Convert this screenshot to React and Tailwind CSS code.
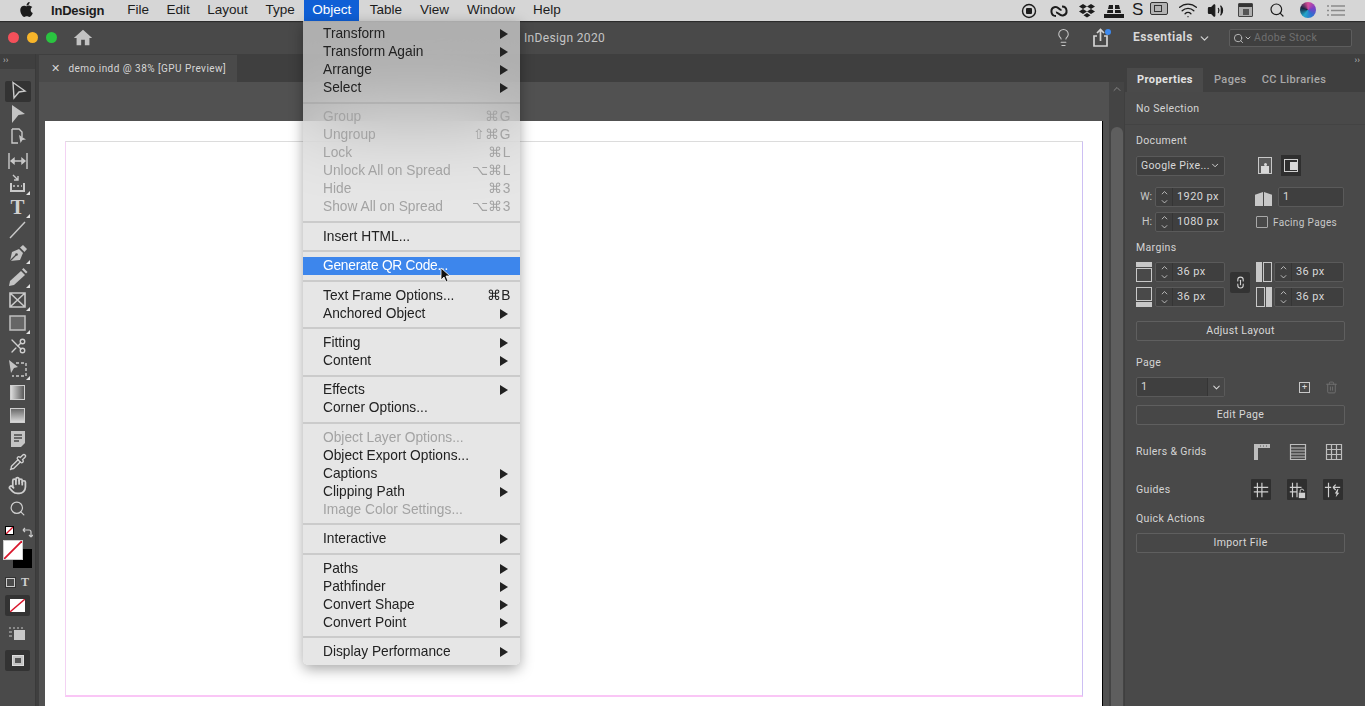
import React from "react";
import { FaApple } from "react-icons/fa";
import { MdHome } from "react-icons/md";
import { Search, ChevronDown, ChevronUp, Lightbulb, Scissors, Hand, Pipette, Volume2, Wifi, Trash2, Link2 } from "lucide-react";

const menu = [
  [["Transform", 1], ["Transform Again", 1], ["Arrange", 1], ["Select", 1]],
  [["Group", 0, "⌘G"], ["Ungroup", 0, "⇧⌘G"], ["Lock", 0, "⌘L"], ["Unlock All on Spread", 0, "⌥⌘L"], ["Hide", 0, "⌘3"], ["Show All on Spread", 0, "⌥⌘3"]],
  [["Insert HTML..."]],
  [["Generate QR Code...", 2]],
  [["Text Frame Options...", 0, "⌘B", true], ["Anchored Object", 1]],
  [["Fitting", 1], ["Content", 1]],
  [["Effects", 1], ["Corner Options..."]],
  [["Object Layer Options...", 0, "", false, true], ["Object Export Options..."], ["Captions", 1], ["Clipping Path", 1], ["Image Color Settings...", 0, "", false, true]],
  [["Interactive", 1]],
  [["Paths", 1], ["Pathfinder", 1], ["Convert Shape", 1], ["Convert Point", 1]],
  [["Display Performance", 1]],
];

function MenuRow({ item, groupIdx }) {
  const [label, kind, shortcut, shortcutDark, dimmed] = item;
  const disabled = groupIdx === 1 || dimmed;
  if (kind === 2) {
    return (
      <div className="h-[18px] flex items-center pl-5 pr-2 bg-[#3d86ec] text-white tracking-[-0.25px]">{label}</div>
    );
  }
  return (
    <div className={`h-[18px] flex items-center justify-between pl-5 pr-[9px] ${disabled ? "text-[#a3a3a3]" : "text-[#222222]"}`}>
      <span>{label}</span>
      {kind === 1 && (
        <svg width="9" height="10" viewBox="0 0 9 10" className="mr-[2px]"><polygon points="0,0 8,5 0,10" fill="#222222" /></svg>
      )}
      {shortcut && <span className={`tracking-[0.6px] ${shortcutDark ? "text-[#222222]" : "text-[#a3a3a3]"}`}>{shortcut}</span>}
    </div>
  );
}

function ObjectMenu() {
  return (
    <div className="absolute left-[303px] top-[21px] w-[217px] h-[644px] pt-[4px] rounded-b-[5px] bg-[#dcdcdc]/70 backdrop-blur-2xl shadow-[0_4px_14px_rgba(0,0,0,0.35)] text-[13.75px] leading-[18px] font-['Liberation_Sans',sans-serif] z-20">
      {menu.map((group, i) => (
        <React.Fragment key={i}>
          {i > 0 && (
            <div className="h-[11.4px] flex items-center"><div className="h-[2px] w-full bg-[#8f8f8f]/30" /></div>
          )}
          {group.map((item) => <MenuRow key={item[0]} item={item} groupIdx={i} />)}
        </React.Fragment>
      ))}
    </div>
  );
}

const MI = ({ w = 20, children, vb = "0 0 20 16", h = 16, cls = "" }) => (
  <svg width={w} height={h} viewBox={vb} className={`shrink-0 ${cls}`}>{children}</svg>
);

function StatusIcons() {
  return (
    <div className="absolute right-0 top-0 h-[21px] text-[#1c1c1c]">
      <div className="relative h-full w-[365px]">
        <div className="absolute left-[21px] top-[3px]">
          <MI w="16" vb="0 0 16 16"><circle cx="8" cy="8" r="6.5" fill="none" stroke="#1c1c1c" strokeWidth="1.4" /><rect x="5" y="5" width="6" height="6" rx="1" fill="#1c1c1c" /></MI>
        </div>
        <div className="absolute left-[49px] top-[3px]">
          <MI w="20"><path d="M7 13a4.500 4.500 0 0 1-1-8.900C9 3 10 7 12.500 7M13 3.500a4.500 4.500 0 0 1 1 8.900C11 13.500 9 9 7 9.500" fill="none" stroke="#1c1c1c" strokeWidth="2" /></MI>
        </div>
        <div className="absolute left-[78px] top-[3px]">
          <MI w="18" vb="0 0 18 16"><path d="M5 1 1 3.500 5 6l4-2.500ZM13 1 9 3.500 13 6l4-2.500ZM5 6 1 8.500 5 11l4-2.500ZM13 6 9 8.500 13 11l4-2.500ZM9 10 5.500 12.200 9 14.500l3.500-2.300Z" fill="#1c1c1c" /></MI>
        </div>
        <div className="absolute left-[104px] top-[3px]">
          <MI w="20"><path d="M5 2h4v4H4ZM11 2h4l1 4h-5ZM3.500 7H9v3H3ZM11 7h5.500l.500 3H11ZM0 11h20v4H0Z" fill="#1c1c1c" /></MI>
        </div>
        <span className="absolute left-[132px] top-[-1px] text-[17px] leading-[22px] font-['Liberation_Sans',sans-serif]">S</span>
        <div className="absolute left-[150px] top-[2px] w-[18px] h-[13px] border border-[#333333] rounded-[2px] bg-[#b3b3b3] flex items-center pl-[3px]">
          <div className="w-[8px] h-[7px] border border-[#333333]" />
        </div>
        <Wifi size={20} strokeWidth={1.6} className="absolute left-[178px] top-[0px]" />
        <Volume2 size={17} fill="#1c1c1c" strokeWidth={1.6} className="absolute left-[207px] top-[2px]" />
        <div className="absolute left-[238px] top-[3px] w-[15px] h-[14px] border border-[#444444] bg-[#aeaeae] rounded-[1px]">
          <div className="h-[3px] bg-[#333333]" />
          <div className="mx-auto mt-[2px] w-[6px] h-[6px] bg-[#555555]" />
        </div>
        <Search size={16} strokeWidth={1.8} className="absolute left-[269px] top-[2px]" />
        <div className="absolute left-[300px] top-[2px] w-[16px] h-[16px] rounded-full bg-[conic-gradient(#d84a9a,#7b3fc4,#2e6fd0,#22a6c8,#16243f,#d84a9a)]" />
        <div className="absolute left-[327px] top-[5px]">
          <MI w="18" h="11" vb="0 0 18 11"><path d="M0 1h2M4 1h14M0 5.500h2M4 5.500h14M0 10h2M4 10h14" stroke="#8a8a8a" strokeWidth="1.300" /></MI>
        </div>
      </div>
    </div>
  );
}

function MenuBar() {
  const items = ["File", "Edit", "Layout", "Type"];
  const rest = ["Table", "View", "Window", "Help"];
  return (
    <div className="relative h-[21px] bg-[#d6d6d6] flex items-center text-[13.5px] text-[#1c1c1c] font-['Liberation_Sans',sans-serif] shadow-[0_1px_1px_rgba(0,0,0,0.4)] z-10">
      <FaApple size={17} className="ml-[18px] mr-[16px] -mt-[2px]" />
      <span className="font-bold text-[13px] tracking-[-0.2px] mr-[23px]">InDesign</span>
      <div className="flex items-center gap-[17.5px]">
        {items.map((t) => <span key={t}>{t}</span>)}
        <span className="-ml-2 px-2 h-[21px] flex items-center bg-[#0f5fd6] text-white">Object</span>
      </div>
      <div className="ml-[10.5px] flex items-center gap-[18px]">
        {rest.map((t) => <span key={t}>{t}</span>)}
      </div>
      <StatusIcons />
    </div>
  );
}

function TitleBar() {
  return (
    <div className="relative h-[33px] bg-[#494949] flex items-center font-['Roboto',sans-serif]">
      <span className="ml-[8px] w-[11px] h-[11px] rounded-full bg-[#f4505a]" />
      <span className="ml-[8px] w-[11px] h-[11px] rounded-full bg-[#f7b52a]" />
      <span className="ml-[8px] w-[11px] h-[11px] rounded-full bg-[#2ac440]" />
      <MdHome size={22} className="ml-[15px] text-[#c2c2c2]" />
      <span className="ml-[430px] text-[12px] tracking-[0.35px] text-[#c4c4c4]">InDesign 2020</span>
      <Lightbulb size={19} strokeWidth={1.3} className="absolute left-[1054px] top-[7px] text-[#c8c8c8]" />
      <div className="absolute left-[1091px] top-[7px]">
        <svg width="20" height="20" viewBox="0 0 20 20"><path d="M6 8H3v10h13V8h-3M9.500 13V2M6 5l3.500-3.500L13 5" fill="none" stroke="#d4d4d4" strokeWidth="1.700" /></svg>
      </div>
      <span className="absolute left-[1105px] top-[8px] w-[6px] h-[6px] rounded-full bg-[#3d8af0]" />
      <span className="absolute left-[1133px] top-[9px] text-[12px] leading-[15px] font-bold tracking-[0.45px] text-[#d8d8d8]">Essentials</span>
      <ChevronDown size={13} strokeWidth={2.4} className="absolute left-[1198px] top-[11px] text-[#d0d0d0]" />
      <div className="absolute left-[1229px] top-[8px] w-[123px] h-[18px] bg-[#3f3f3f] border border-[#5d5d5d] rounded-[2px] flex items-center pl-[3px] text-[10.5px] tracking-[0.35px] text-[#6f6f6f]">
        <Search size={11} strokeWidth={2} className="text-[#bdbdbd]" />
        <ChevronDown size={8} strokeWidth={3} className="text-[#bdbdbd] mr-[2px]" />
        Adobe Stock
      </div>
    </div>
  );
}

const stroke = { fill: "none", stroke: "#c9c9c9", strokeWidth: 1.4 };
const fill = { fill: "#c4c4c4" };
const Tri = () => <polygon points="24,18 24,22 20,22" fill="#e2e2e2" />;

const tools = [
  { active: true, d: <path d="M7 2.500 19 11l-6 1-5 6Z" {...stroke} /> },
  { d: <path d="M6 2 19 11l-6.500 1L6 20Z" {...fill} /> },
  { d: <g><path d="M6 3h7l3 3v5M6 3v14h6" {...stroke} /><path d="M13 9l7 4.500-3.500.5-2 3Z" {...fill} /></g> },
  { d: <path d="M3 3v16M21 3v16M5 11h14M5 11l3-2.500v5ZM19 11l-3-2.500v5Z" {...stroke} /> },
  { t: 1, d: <g><path d="M5 10v8h13v-8" {...stroke} strokeWidth="2" /><path d="M7 2l5 5M12 3v4H8" {...stroke} /><path d="M7 13h2M11 13h2M15 13h1" {...stroke} /></g> },
  { t: 1, txt: "T" },
  { d: <path d="M4 19 19 3" {...stroke} /> },
  { t: 1, d: <g><path d="M4 19l2-9 7-3 4 4-3 7Z" {...fill} /><path d="M14 5.500l3-2.500 4 4-2.500 3Z" {...fill} /><path d="M4 19l6-6" stroke="#4a4a4a" strokeWidth="1.200" /><circle cx="10.500" cy="12.500" r="1.300" fill="#4a4a4a" /></g> },
  { t: 1, d: <g><path d="M15 5l4 4L8 19l-5 1 1-5Z" {...fill} /><path d="M16 3.500l1.500-1.500 4 4-1.500 1.500Z" {...fill} /></g> },
  { t: 1, d: <path d="M4 4h15v14H4ZM4 4l15 14M19 4 4 18" {...stroke} strokeWidth="1.600" /> },
  { t: 1, d: <rect x="4" y="4" width="15" height="14" fill="#666666" stroke="#c0c0c0" strokeWidth="1.500" /> },
  { icon: <Scissors size={18} strokeWidth={1.8} className="text-[#cfcfcf] -scale-x-100" /> },
  { t: 1, d: <g><path d="M3 2l9 7-4 1-3 5Z" {...fill} /><path d="M10 5h10v13H6" {...stroke} strokeDasharray="3 2" /></g> },
  { grad: "bg-[linear-gradient(90deg,#dadada,#5a5a5a)]" },
  { grad: "bg-[linear-gradient(180deg,#6a6a6a,#dadada)]" },
  { t: 0, d: <g><path d="M5 3h14v12l-4 4H5Z" {...fill} /><path d="M8 7h8M8 10h8M8 13h5" stroke="#4a4a4a" strokeWidth="1.300" /></g> },
  { t: 1, icon: <Pipette size={18} strokeWidth={1.8} className="text-[#cfcfcf] -scale-x-100 rotate-90" /> },
  { icon: <Hand size={19} strokeWidth={2.2} className="text-[#cfcfcf]" /> },
  { icon: <Search size={17} strokeWidth={1.7} className="text-[#cfcfcf]" /> },
];

function Tool({ tool }) {
  return (
    <div className="h-[23.2px] flex items-center justify-center">
      <div className={`relative w-[26px] h-[21px] flex items-center justify-center rounded-[2px] ${tool.active ? "bg-[#333333]" : ""}`}>
        {tool.d && <svg width="24" height="22" viewBox="0 0 24 22">{tool.d}{tool.t ? <Tri /> : null}</svg>}
        {tool.txt && (
          <>
            <span className="font-['Liberation_Serif',serif] font-bold text-[21px] leading-[21px] text-[#d0d0d0]">{tool.txt}</span>
            <svg width="4" height="4" viewBox="0 0 4 4" className="absolute right-[1px] bottom-0"><polygon points="4,0 4,4 0,4" fill="#e2e2e2" /></svg>
          </>
        )}
        {tool.icon}
        {tool.grad && <div className={`w-[15px] h-[15px] border border-[#cfcfcf] ${tool.grad}`} />}
      </div>
    </div>
  );
}

const NoneSwatch = ({ cls }) => (
  <div className={`overflow-hidden bg-white ${cls}`}>
    <svg className="w-full h-full" viewBox="0 0 20 20" preserveAspectRatio="none"><path d="M0 20 20 0" stroke="#d8152b" strokeWidth="2" /></svg>
  </div>
);

function Toolbar() {
  return (
    <div className="w-[36px] shrink-0 bg-[#4a4a4a] border-r-[1px] border-[#3a3a3a] flex flex-col font-['Roboto',sans-serif]">
      <div className="h-[15px] bg-[#3f3f3f] pl-[3px] text-[9px] leading-[13px] text-[#bbbbbb]">››</div>
      <div className="h-[10.500px]" />
      {tools.map((t, i) => <Tool key={i} tool={t} />)}
      <div className="relative h-[45px] mt-[4px]">
        <div className="absolute left-[5px] top-[2px] w-[9px] h-[9px] border border-black bg-white overflow-hidden">
          <svg className="w-full h-full" viewBox="0 0 8 8"><path d="M0 8 8 0" stroke="#d8152b" strokeWidth="1.500" /></svg>
        </div>
        <svg width="11" height="11" viewBox="0 0 11 11" className="absolute left-[22px] top-[3px]"><path d="M1 3h6a2 2 0 0 1 2 2v5M1 3l2-2M1 3l2 2M9 10 7 8M9 10l2-2" fill="none" stroke="#cccccc" strokeWidth="1.200" /></svg>
        <div className="absolute left-[13px] top-[25px] w-[19px] h-[19px] bg-black" />
        <NoneSwatch cls="absolute left-[3px] top-[16px] w-[20px] h-[20px] border border-[#cccccc]" />
      </div>
      <div className="flex items-center justify-center gap-[6px] h-[22px] mt-[2px]">
        <div className="w-[9px] h-[9px] border-[1.5px] border-[#cccccc] outline-[1px] outline-[#333333]" />
        <span className="font-['Liberation_Serif',serif] font-bold text-[12px] leading-[12px] text-[#d0d0d0]">T</span>
      </div>
      <div className="relative mx-[5px] h-[21px] mt-[2px] rounded-[2px] bg-[#333333] flex items-center justify-center">
        <NoneSwatch cls="w-[15px] h-[13px]" />
      </div>
      <div className="h-[28px] mt-[4px] flex items-center justify-center">
        <svg width="18" height="14" viewBox="0 0 18 14"><rect x="5" y="3" width="11" height="10" fill="#c8c8c8" /><path d="M0 1h2M4 1h2M8 1h2M12 1h2M0 5h3M0 9h3" stroke="#c8c8c8" strokeWidth="1.200" /></svg>
      </div>
      <div className="mx-[5px] h-[21px] mt-[2px] rounded-[2px] bg-[#333333] flex items-center justify-center">
        <div className="w-[12px] h-[11px] bg-[#c4c4c4] border border-[#dddddd] flex items-center justify-center">
          <div className="w-[6px] h-[5px] bg-[#555555]" />
        </div>
      </div>
    </div>
  );
}

function Canvas() {
  return (
    <div className="flex-1 min-w-0 flex flex-col font-['Roboto',sans-serif] pl-[3px] bg-[#3f3f3f]">
      <div className="h-[28px] flex pt-[1px]">
        <div className="w-[198px] h-[27px] bg-[#4a4a4a] flex items-center text-[10px] tracking-[0.45px] text-[#d6d6d6]">
          <span className="ml-[12px] mr-[8px] text-[11px] leading-none">✕</span>
          demo.indd @ 38% [GPU Preview]
        </div>
      </div>
      <div className="flex-1 min-h-0 flex bg-[#515151]">
        <div className="flex-1 min-w-0 pl-[6px] pt-[39px] pr-[6px] overflow-hidden">
          <div className="h-full bg-white border-r-[1px] border-black pl-[20px] pt-[20px]">
            <div className="w-[1018px] h-[556px] border border-t-[#dcdcdc] border-l-[#f3d3f3] border-r-[#cdbff3] border-b-[#fac6f6] border-b-[2px]" />
          </div>
        </div>
        <div className="w-[15px] shrink-0 bg-[#444444] flex flex-col items-center pt-[1px]">
          <ChevronUp size={12} strokeWidth={2} className="text-[#858585] mt-[0px]" />
          <div className="mt-[32px] w-[12px] flex-1 rounded-t-[6px] bg-[#5e5e5e]" />
        </div>
      </div>
    </div>
  );
}

const Stepper = () => (
  <div className="w-[17px] h-full shrink-0 border-r border-[#353535] flex flex-col items-center justify-center text-[#d8d8d8]">
    <ChevronUp size={11} strokeWidth={2} className="-mb-[1px]" />
    <ChevronDown size={11} strokeWidth={2} />
  </div>
);

const Field = ({ value, w = "w-[69px]", step = true }) => (
  <div className={`${w} h-[20px] shrink-0 bg-[#3f3f3f] border border-[#5a5a5a] rounded-[2px] flex items-center text-[11px] tracking-[0.4px] text-[#d8d8d8]`}>
    {step && <Stepper />}
    <span className="pl-[4px]">{value}</span>
  </div>
);

const Btn = ({ children, cls = "" }) => (
  <div className={`h-[20px] w-[209px] bg-[#474747] border border-[#5f5f5f] rounded-[2px] flex items-center justify-center text-[10.500px] tracking-[0.35px] text-[#d8d8d8] ${cls}`}>{children}</div>
);

const Label = ({ children, cls = "" }) => <div className={`text-[10.500px] leading-[14px] tracking-[0.35px] text-[#d4d4d4] ${cls}`}>{children}</div>;

const MarginIcon = ({ side }) => (
  <div className={`w-[16px] h-[20px] shrink-0 flex ${side === "t" ? "flex-col" : side === "b" ? "flex-col-reverse" : side === "l" ? "flex-row" : "flex-row-reverse"} gap-[1px]`}>
    <div className={`bg-[#c8c8c8] ${side === "t" || side === "b" ? "h-[5px]" : "w-[6px]"}`} />
    <div className="flex-1 border border-[#c8c8c8]" />
  </div>
);

const SmallDark = ({ children }) => (
  <div className="w-[20px] h-[21px] bg-[#2f2f2f] rounded-[1px] flex items-center justify-center">
    {children}
  </div>
);

const guidePaths = "M6 2v16M11 2v16M2 7h16M2 12h16";

function Panel() {
  return (
    <div className="w-[240px] ml-[1px] shrink-0 bg-[#494949] flex flex-col font-['Roboto',sans-serif]">
      <div className="h-[14px] bg-[#3f3f3f] text-right pr-[5px] text-[9px] leading-[12px] text-[#bbbbbb]">››</div>
      <div className="h-[24px] flex bg-[#3f3f3f] items-stretch text-[11px] font-medium tracking-[0.4px]">
        <div className="ml-[2px] w-[76px] bg-[#4a4a4a] flex items-center justify-center text-[#e2e2e2] font-bold">Properties</div>
        <div className="ml-[11px] flex items-center text-[#a8a8a8]">Pages</div>
        <div className="ml-[15px] flex items-center text-[#a8a8a8]">CC Libraries</div>
      </div>
      <div className="pl-[11px] flex flex-col">
        <Label cls="mt-[10px]">No Selection</Label>
        <div className="mt-[8px] -ml-[11px] h-[1px] bg-[#434343]" />
        <Label cls="mt-[9px]">Document</Label>
        <div className="mt-[7px] flex items-center">
          <div className="w-[89px] h-[20px] bg-[#3f3f3f] border border-[#5a5a5a] rounded-[2px] flex items-center justify-between px-[4px] text-[10.500px] tracking-[0.35px] text-[#d8d8d8] whitespace-nowrap">
            Google Pixe...
            <ChevronDown size={11} strokeWidth={2.2} />
          </div>
          <div className="ml-[33px] w-[14px] h-[17px] border border-[#c8c8c8] bg-[#5a5a5a] flex flex-col items-center justify-end">
            <div className="w-[3px] h-[3px] bg-[#d8d8d8] rounded-full" />
            <div className="w-[8px] h-[7px] bg-[#d8d8d8]" />
          </div>
          <div className="ml-[9px] w-[20px] h-[21px] bg-[#2f2f2f] flex items-center justify-center">
            <div className="w-[14px] h-[13px] border border-[#d0d0d0] flex items-center justify-end">
              <div className="w-[7px] h-[8px] bg-[#d8d8d8]" />
            </div>
          </div>
        </div>
        <div className="mt-[11px] flex items-center">
          <div className="w-[19px] text-[10.500px] text-[#c8c8c8] text-right pr-[3px]">W:</div>
          <Field value="1920 px" w="w-[70px]" />
          <div className="ml-[30px] w-[17px] h-[18px] flex gap-[1px] items-end">
            <div className="w-[8px] h-[14px] bg-[#c8c8c8] [clip-path:polygon(0_20%,100%_0,100%_100%,0_100%)]" />
            <div className="w-[8px] h-[14px] bg-[#c8c8c8] [clip-path:polygon(0_0,100%_20%,100%_100%,0_100%)]" />
          </div>
          <div className="ml-[6px]"><Field value="1" w="w-[66px]" step={false} /></div>
        </div>
        <div className="mt-[5px] flex items-center">
          <div className="w-[19px] text-[10.500px] text-[#c8c8c8] text-right pr-[3px]">H:</div>
          <Field value="1080 px" w="w-[70px]" />
          <div className="ml-[31px] w-[12px] h-[12px] border border-[#a8a8a8] rounded-[1px]" />
          <span className="ml-[5px] text-[10px] tracking-[0.35px] text-[#c8c8c8]">Facing Pages</span>
        </div>
        <Label cls="mt-[9px]">Margins</Label>
        <div className="relative mt-[7px] flex flex-col gap-[5px]">
          <div className="flex items-center">
            <MarginIcon side="t" />
            <div className="ml-[3px]"><Field value="36 px" w="w-[70px]" /></div>
            <div className="ml-[31px]"><MarginIcon side="l" /></div>
            <div className="ml-[2px]"><Field value="36 px" w="w-[70px]" /></div>
          </div>
          <div className="flex items-center">
            <MarginIcon side="b" />
            <div className="ml-[3px]"><Field value="36 px" w="w-[70px]" /></div>
            <div className="ml-[31px]"><MarginIcon side="r" /></div>
            <div className="ml-[2px]"><Field value="36 px" w="w-[70px]" /></div>
          </div>
          <div className="absolute left-[94px] top-[10px] w-[20px] h-[21px] rounded-[2px] bg-[#333333] flex items-center justify-center">
            <Link2 size={13} strokeWidth={2} className="rotate-90 text-[#d4d4d4]" />
          </div>
        </div>
        <Btn cls="mt-[14px]">Adjust Layout</Btn>
        <Label cls="mt-[15px]">Page</Label>
        <div className="mt-[7px] flex items-center">
          <div className="w-[89px] h-[20px] bg-[#3f3f3f] border border-[#5a5a5a] rounded-[2px] flex items-center text-[11px] text-[#d8d8d8]">
            <span className="flex-1 pl-[4px]">1</span>
            <div className="w-[17px] h-full border-l border-[#353535] bg-[#474747] flex items-center justify-center">
              <ChevronDown size={11} strokeWidth={2.2} />
            </div>
          </div>
          <div className="ml-[74px] w-[11px] h-[11px] border border-[#c8c8c8] flex items-center justify-center text-[9px] leading-none text-[#d8d8d8]">+</div>
          <Trash2 size={13} strokeWidth={1.8} className="ml-[15px] text-[#6f6f6f]" />
        </div>
        <Btn cls="mt-[8px]">Edit Page</Btn>
        <div className="mt-[17px] h-[20px] flex items-center">
          <Label cls="w-[116px]">Rulers &amp; Grids</Label>
          <svg width="18" height="18" viewBox="0 0 18 18" className="ml-[1px]"><path d="M1 1h16v4H5v12H1Z" fill="#bdbdbd" /><path d="M7 3h1M10 3h1M13 3h1" stroke="#555555" /></svg>
          <svg width="18" height="18" viewBox="0 0 18 18" className="ml-[18px]"><path d="M1.500 1.500h15v15h-15ZM1.500 5h15M1.500 8h15M1.500 11h15M1.500 14h15" fill="none" stroke="#bdbdbd" strokeWidth="1.200" /></svg>
          <svg width="18" height="18" viewBox="0 0 18 18" className="ml-[18px]"><path d="M1.500 1.500h15v15h-15ZM6.500 1.500v15M11.500 1.500v15M1.500 6.500h15M1.500 11.500h15" fill="none" stroke="#bdbdbd" strokeWidth="1.200" /></svg>
        </div>
        <div className="mt-[17px] h-[21px] flex items-center">
          <Label cls="w-[115px]">Guides</Label>
          <SmallDark><svg width="18" height="18" viewBox="0 0 20 20"><path d={guidePaths} stroke="#d0d0d0" strokeWidth="1.300" /></svg></SmallDark>
          <div className="ml-[16px]"><SmallDark><svg width="18" height="18" viewBox="0 0 20 20"><path d="M5 2v16M10 2v16M2 7h13M2 12h8" stroke="#d0d0d0" strokeWidth="1.300" /><rect x="12" y="13" width="7" height="6" fill="#d0d0d0" /><path d="M13.500 13v-2a2 2 0 0 1 4 0" fill="none" stroke="#d0d0d0" /></svg></SmallDark></div>
          <div className="ml-[16px]"><SmallDark><svg width="18" height="18" viewBox="0 0 20 20"><path d="M5 2v16M1 7h7M10 7h8M10 7l3-3M10 7l3 3" fill="none" stroke="#d0d0d0" strokeWidth="1.300" /><path d="M15 9l-3 5h2l-1 4 4-5h-2l1-4Z" fill="#d0d0d0" /></svg></SmallDark></div>
        </div>
        <Label cls="mt-[12px]">Quick Actions</Label>
        <Btn cls="mt-[7px]">Import File</Btn>
      </div>
    </div>
  );
}

export default function App() {
  return (
    <div className="relative w-[1365px] h-[706px] overflow-hidden flex flex-col bg-[#3f3f3f]">
      <MenuBar />
      <TitleBar />
      <div className="flex-1 min-h-0 flex">
        <Toolbar />
        <Canvas />
        <Panel />
      </div>
      <ObjectMenu />
      <svg width="11" height="16" viewBox="0 0 11 16" className="absolute left-[440px] top-[267px] z-30">
        <path d="M1 1v12l3-3 2 5 2-1-2-5h4Z" fill="#111111" stroke="#ffffff" strokeWidth="0.800" />
      </svg>
    </div>
  );
}
